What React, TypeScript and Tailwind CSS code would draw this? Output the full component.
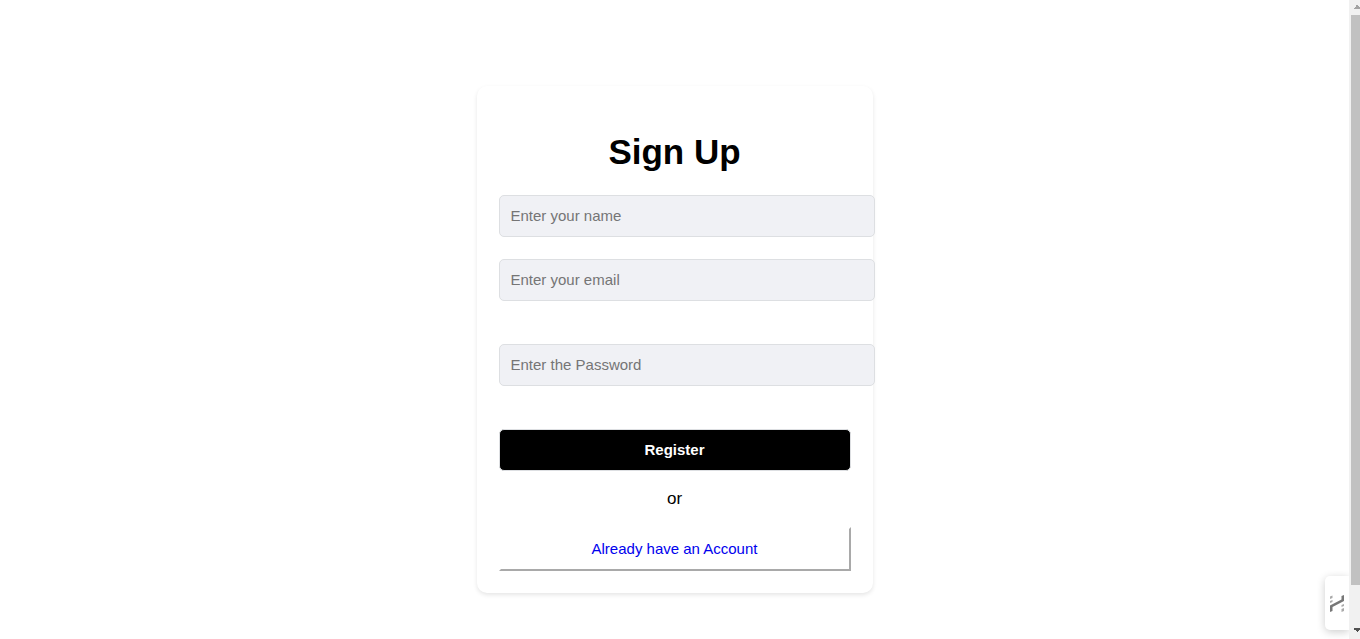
import type { InputHTMLAttributes } from "react";

function Field({ label, className = "", ...props }: InputHTMLAttributes<HTMLInputElement> & { label: string }) {
  return (
    <div className={`w-[calc(100%+24px)] ${className}`}>
      <input
        {...props}
        aria-label={label}
        placeholder={label}
        className="block h-[42px] w-full rounded-[5px] border border-[#dddfe2] bg-[#f0f1f5] px-[11px] pb-0.5 text-[15px] leading-5 text-black outline-none placeholder:text-[#757575]"
      />
    </div>
  );
}

function Scrollbar() {
  return (
    <div aria-hidden="true" className="sticky top-0 flex h-screen w-[11px] shrink-0 flex-col bg-[#f1f1f1]">
      <svg viewBox="0 0 11 15" className="h-[15px] w-full shrink-0" shapeRendering="crispEdges">
        <path d="M7 5h2v1h1v1h1v2H5V8h1V7h1z" fill="#a3a3a3" />
      </svg>
      <div className="ml-0.5 grow bg-[#c1c1c1]" />
      <div className="flex h-[54px] shrink-0 items-end">
        <svg viewBox="0 0 11 15" className="h-[15px] w-full" shapeRendering="crispEdges">
          <path d="M5 4h6v2h-1v1H9v1H8V7H7V6H5z" fill="#505050" />
        </svg>
      </div>
    </div>
  );
}

function SideWidget() {
  return (
    <button
      type="button"
      aria-label="Open side panel"
      className="fixed right-[11px] bottom-[9px] flex h-[54px] w-6 items-center rounded-l-[5px] bg-white pl-[5px] shadow-[0_2px_8px_rgba(0,0,0,0.2)]"
    >
      <svg viewBox="0 0 14 19" className="h-[19px] w-3.5">
        <path d="M0 11.500L11.500 5.500V2L14 1v6L2.500 13v4L0 18z" fill="#777" />
        <path d="M0 2.500l2.500-1V4L0 5zM0 7l2.500-1v2L0 9zM11.500 11l2.500-1v2l-2.500 1zM11.500 15l2.500-1v3l-2.500 1z" fill="#aaa" />
      </svg>
    </button>
  );
}

export default function App() {
  return (
    <div className="flex min-h-screen bg-white font-['Liberation_Sans',Arial,sans-serif] text-black">
      <main className="flex grow items-start justify-center pt-[86px] pb-11">
        <form
          onSubmit={(e) => e.preventDefault()}
          className="w-[396px] rounded-[10px] bg-white px-[22px] pt-[46px] pb-[22px] shadow-[0_2px_4px_rgba(0,0,0,0.1)]"
        >
          <h1 className="text-center text-[35px] leading-10 font-bold">Sign Up</h1>
          <Field label="Enter your name" type="text" className="mt-[23px]" />
          <Field label="Enter your email" type="email" className="mt-[22px]" />
          <Field label="Enter the Password" type="password" className="mt-[43px]" />
          <button
            type="submit"
            className="mt-[43px] block h-[42px] w-full rounded-[5px] border border-[#dddfe2] bg-black text-[15px] leading-5 font-bold text-white"
          >
            Register
          </button>
          <p className="mt-[18px] text-center text-[17px] leading-5">or</p>
          <a
            href="#login"
            className="mt-[18px] flex h-11 items-center justify-center border-2 border-t-transparent border-r-[#a9a9a9] border-b-[#a9a9a9] border-l-transparent text-[15px] leading-5 text-[#0000ee]"
          >
            Already have an Account
          </a>
        </form>
      </main>
      <SideWidget />
      <Scrollbar />
    </div>
  );
}
